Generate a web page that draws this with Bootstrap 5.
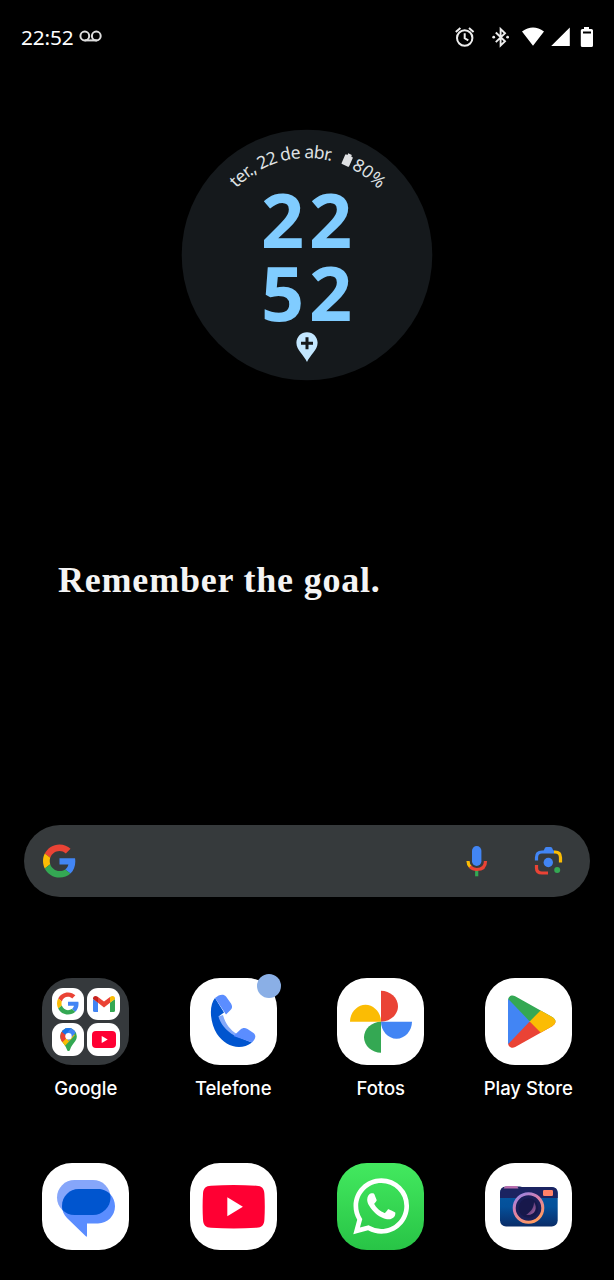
<!DOCTYPE html>
<html lang="pt-BR">
<head>
<meta charset="utf-8">
<meta name="viewport" content="width=device-width, initial-scale=1">
<title>Tela inicial</title>
<link href="https://cdn.jsdelivr.net/npm/bootstrap@5.3.0/dist/css/bootstrap.min.css" rel="stylesheet">
<style>
  body { background:#000; color:#fff; font-family:"Noto Sans","Open Sans",sans-serif; }
  svg { display:block; flex:none; overflow:visible; }
  .phone { width:614px; height:1280px; overflow:hidden; }
  .phone > * { flex-shrink:0; }
  .status { height:74px; padding:0 20px 0 21px; }
  .status-time { font-size:20.8px; line-height:1; letter-spacing:-.1px; }
  .clock-wrap { padding-top:56px; }
  .quote { font:bold 36px/1 "Liberation Serif",serif; letter-spacing:.8px; color:#f4f4f4; margin:182px 0 0 58px; height:263px; white-space:nowrap; }
  .searchbar { height:72px; margin:0 24px; border-radius:36px; background:#363a3c; padding:0 27px 0 19px; }
  .apps { margin:80.5px 12px 0; }
  .apps + .apps { margin-top:58px; }
  .app { width:147.5px; height:127px; }
  .tile { width:87px; height:87px; border-radius:30px; background:#fff; }
  .folder { background:#35393c; display:grid; grid-template-columns:32.5px 32.5px; gap:3px; padding:10px 9.5px; }
  .mini { border-radius:11px; background:#fff; display:grid; place-items:center; height:32.5px; }
  .app-name { font:500 18.5px/24px Inter,Lato,sans-serif; margin-top:11px; white-space:nowrap; }
  .wa { background:linear-gradient(#43e95f,#28c446); }
  .dot { width:24px; height:24px; right:-4px; top:-4px; background:#8aafe6; }
</style>
</head>
<body>
<svg width="0" height="0" class="position-absolute" aria-hidden="true">
  <symbol id="g-logo" viewBox="0 0 48 48">
    <path fill="#ea4335" d="M24 9.5c3.54 0 6.71 1.22 9.21 3.6l6.85-6.85C35.9 2.38 30.47 0 24 0 14.62 0 6.51 5.38 2.56 13.22l7.98 6.19C12.43 13.72 17.74 9.5 24 9.5z"/>
    <path fill="#4285f4" d="M46.98 24.55c0-1.57-.15-3.09-.38-4.55H24v9.02h12.94c-.58 2.96-2.26 5.48-4.78 7.18l7.73 6c4.51-4.18 7.09-10.36 7.09-17.65z"/>
    <path fill="#fbbc05" d="M10.53 28.59c-.48-1.45-.76-2.99-.76-4.59s.27-3.14.76-4.59l-7.98-6.19C.92 16.46 0 20.12 0 24c0 3.88.92 7.54 2.56 10.78l7.97-6.19z"/>
    <path fill="#34a853" d="M24 48c6.48 0 11.93-2.13 15.89-5.81l-7.73-6c-2.15 1.45-4.92 2.3-8.16 2.3-6.26 0-11.57-4.22-13.47-9.91l-7.98 6.19C6.51 42.62 14.62 48 24 48z"/>
  </symbol>
</svg>

<main class="phone d-flex flex-column">
  <header class="status d-flex align-items-center justify-content-between">
    <div class="d-flex align-items-center">
      <span class="status-time">22:52</span>
      <svg class="ms-1" width="24" height="13" viewBox="-.8 0 24 13" fill="none" stroke="#ddd" stroke-width="2"><circle cx="6" cy="6" r="4.4"/><circle cx="17.500" cy="6" r="4.4"/><path d="M6 10.4h12"/></svg>
    </div>
    <!-- alarm, bluetooth, wifi, signal, battery -->
    <svg width="140" height="24" viewBox="454 25 140 24">
      <g fill="none" stroke="#eee" stroke-width="2"><circle cx="464.7" cy="38" r="7.7"/><path d="M464.7 33.3v5l3.6 2.1M455.8 32l4.6-3.9M469 28.1l4.6 3.9"/></g>
      <path d="M495.8 32.5l9.2 8.8-4.4 4.3V29l4.4 4.2-9.2 8.9" fill="none" stroke="#eee" stroke-width="1.9"/>
      <circle cx="493.7" cy="37.2" r="1.4" fill="#eee"/><circle cx="507.6" cy="37.2" r="1.4" fill="#eee"/>
      <path fill="#fff" d="M522 31.6q11-8.4 22 0L533 45.7zM551.2 46h18.6V27.6z"/>
      <path fill="#fff" fill-rule="evenodd" d="M584 27h5v2h2.400q1.600 0 1.600 1.600V45.400q0 1.600-1.600 1.600h-9q-1.600 0-1.600-1.600V30.600q0-1.600 1.600-1.600h1.600zM583 31.500v2h8v-2z"/>
    </svg>
  </header>

  <section class="clock-wrap d-flex justify-content-center">
    <svg width="250" height="250" viewBox="182 130 250 250">
      <circle cx="307" cy="255" r="125.300" fill="#15191c"/>
      <path id="arcDate" d="M236.600 188.300A97 97 0 0 1 404 255" fill="none"/>
      <path id="arcPct" d="M351.300 168.700A97 97 0 0 1 404 255" fill="none"/>
      <g fill="#dfe1e3" font-size="17.500" font-family="'Noto Sans',sans-serif">
        <text><textPath href="#arcDate" textLength="103.500">ter., 22 de abr.</textPath></text>
        <text><textPath href="#arcPct" textLength="34.500">80%</textPath></text>
      </g>
      <path transform="translate(347.400 160) rotate(24)" fill="#dfe1e3" d="M-2-6.500h4v1.800h1.200q.9 0 .9.900V5q0 .9-.9.900h-6.400q-.9 0-.9-.9v-8.800q0-.9.900-.9H-2z"/>
      <g fill="#80ccff" font-family="'Noto Sans',sans-serif" font-weight="700" font-size="75.500" letter-spacing="4.700">
        <text x="261" y="247.500">22</text><text x="261" y="321">52</text>
      </g>
      <path fill="#c3e7ff" d="M307 332.300c-6 0-10.600 4.700-10.600 10.500 0 7.500 7.600 12.400 10.600 19.200 3-6.800 10.600-11.700 10.600-19.200 0-5.800-4.600-10.500-10.600-10.500z"/>
      <path stroke="#15191c" stroke-width="3" d="M301 343.200h12M307 337.200v12"/>
    </svg>
  </section>

  <div class="quote">Remember the goal.</div>

  <section class="searchbar d-flex align-items-center justify-content-between">
    <svg width="33" height="34"><use href="#g-logo"/></svg>
    <svg width="98" height="34" viewBox="465 844 98 34">
      <rect x="472" y="846" width="9.400" height="20" rx="4.700" fill="#4285f4"/>
      <g fill="none" stroke-width="3.200"><path d="M476.700 870v6.300" stroke="#34a853"/><path d="M468 861q0 3.500 2.500 6.200" stroke="#fbbc04"/><path d="M470 866.700q2.800 2.800 6.700 2.800 8.800 0 8.800-8.500" stroke="#ea4335"/></g>
      <g fill="none" stroke-width="3.200"><path d="M536.500 860.500v-3q0-5.500 5.500-5.500h12" stroke="#4285f4"/><path d="M554 852h1q5.500 0 5.500 5.500v5" stroke="#fbbc04"/><path d="M536.500 865v3q0 5 5.500 5h6" stroke="#ea4335"/></g>
      <path fill="#4285f4" d="M543.500 851l1.500-3.200q.5-.8 1.500-.8h4q1 0 1.500.8l1.500 3.200z"/><circle cx="548.300" cy="862.500" r="4.700" fill="#4285f4"/><circle cx="557.200" cy="870" r="3" fill="#34a853"/>
    </svg>
  </section>

  <section class="apps d-flex">
    <div class="app d-flex flex-column align-items-center">
      <div class="tile folder">
        <div class="mini"><svg width="22" height="23"><use href="#g-logo"/></svg></div>
        <div class="mini"><svg width="22" height="16" viewBox="0 0 22 16"><path fill="#4285f4" d="M0 3l5 3.500V16H1.500Q0 16 0 14.500z"/><path fill="#34a853" d="M22 3l-5 3.500V16h3.500q1.500 0 1.500-1.500z"/><path fill="#ea4335" d="M5 1l6 4.600L17 1v5.800l-6 4.700-6-4.700z"/><path fill="#c5221f" d="M0 2.500C0 0 2.600-.8 5 1v5.800L0 3z"/><path fill="#fbbc04" d="M22 2.500C22 0 19.400-.8 17 1v5.800L22 3z"/></svg></div>
        <div class="mini"><svg width="17" height="23" viewBox="0 0 17 23"><clipPath id="pin"><path d="M8.500 0A8.300 8.300 0 0 0 .2 8.300c0 5.600 4.700 7 6.600 12.900.4 1.300.9 1.800 1.700 1.800s1.300-.5 1.700-1.800c1.900-5.900 6.600-7.300 6.600-12.900A8.300 8.300 0 0 0 8.500 0z"/></clipPath><g clip-path="url(#pin)"><path fill="#34a853" d="M0 0h17v23H0z"/><path fill="#fbbc04" d="M-1 13L8.500 3 15 7 3 20z"/><path fill="#4285f4" d="M5-1h12v4L8.500 13 6 8z"/><path fill="#ea4335" d="M-1 2l4-1 5.500 7.300L1 15.500z"/><path fill="#1a73e8" d="M4-1h8L5.500 7 1.500 3.500z"/></g><circle cx="8.500" cy="8.300" r="3.200" fill="#fff"/></svg></div>
        <div class="mini"><svg width="24" height="17" viewBox="0 0 24 17"><rect width="24" height="17" rx="4" fill="#ff0033"/><path fill="#fff" d="M9.700 5l6 3.500-6 3.500z"/></svg></div>
      </div>
      <div class="app-name">Google</div>
    </div>
    <div class="app d-flex flex-column align-items-center">
      <div class="tile position-relative">
        <svg width="87" height="87" viewBox="0 0 87 87">
          <path fill="#83a9fb" d="M27 39l6-2c2 8 7 15 14 19l-3 8-14-9z"/>
          <path fill="#0055cf" d="M25 20c-6 7-5.500 24 2 36 8 12 23 17.500 35 8.500L44.500 57.500C36 53 30 45 28.500 38.500l5.500-4z"/>
          <path fill="#5b8dff" d="M25 20c4-3.500 8.500-4.500 11-1.500l5 7c1.500 2.500 1.500 4.500-.5 6.500L36 36.500zM43.500 58l7-6.500c2-1.800 4.500-2 7-.5l6 4c3.500 3 1.500 6.500-1.500 9.500z"/>
        </svg>
        <span class="dot rounded-circle position-absolute"></span>
      </div>
      <div class="app-name">Telefone</div>
    </div>
    <div class="app d-flex flex-column align-items-center">
      <div class="tile">
        <svg width="87" height="87" viewBox="0 0 87 87"><path fill="#ea4335" d="M44 12.700c9 0 17 7 17 15.500s-8 15.500-17 15.500z"/><path fill="#fbbc04" d="M13 43.700c0-9 7-17 15.500-17s15.500 8 15.500 17z"/><path fill="#4285f4" d="M44 43.700h31c0 9-7 17-15.500 17S44 52.700 44 43.700z"/><path fill="#34a853" d="M44 43.700v31c-9 0-17-7-17-15.500s8-15.500 17-15.500z"/></svg>
      </div>
      <div class="app-name">Fotos</div>
    </div>
    <div class="app d-flex flex-column align-items-center">
      <div class="tile">
        <svg width="87" height="87" viewBox="0 0 87 87"><clipPath id="tri"><path d="M23 22.500c0-4 3.600-6.300 7.200-4.200l37 20.700c4.400 2.500 4.400 6.700 0 9.200l-37 20.700c-3.600 2.100-7.200-.2-7.200-4.200z"/></clipPath><g clip-path="url(#tri)"><path fill="#34a853" d="M20 10h51v33.500H20z"/><path fill="#ea4335" d="M20 43.400h51V77H20z"/><path fill="#4285f4" d="M20 17.500l24.700 25.900L20 69.300z"/><path fill="#fbbc04" d="M44.700 43.400L60 28h16v31H60z"/></g></svg>
      </div>
      <div class="app-name">Play Store</div>
    </div>
  </section>

  <section class="apps d-flex">
    <div class="app d-flex flex-column align-items-center">
      <div class="tile">
        <svg width="87" height="87" viewBox="0 0 87 87">
          <clipPath id="bub"><rect x="15" y="17" width="53.500" height="35" rx="17.500"/></clipPath>
          <rect x="15" y="17" width="53.500" height="35" rx="17.500" fill="#86a6fa"/>
          <path fill="#5b8dff" d="M37 26h19c9.500 0 17 7.700 17 17.200s-7.500 17.200-17 17.200H45V73q0 1.300-1.200.3L25 55c-3-3-5-7-5-12 0-9.500 7.500-17 17-17z"/>
          <path fill="#0055cf" clip-path="url(#bub)" d="M37 26h19c9.500 0 17 7.700 17 17.200s-7.500 17.200-17 17.200H45L25 55c-3-3-5-7-5-12 0-9.500 7.500-17 17-17z"/>
        </svg>
      </div>
    </div>
    <div class="app d-flex flex-column align-items-center">
      <div class="tile">
        <svg width="87" height="87" viewBox="0 0 87 87"><path fill="#ff0033" d="M21 22.700q22.700-1.400 45.400 0c5.500.3 7.600 2.600 8 8q.8 13 0 26c-.4 5.400-2.500 7.700-8 8q-22.700 1.400-45.400 0c-5.500-.3-7.600-2.600-8-8q-.8-13 0-26c.4-5.400 2.500-7.700 8-8z"/><path fill="#fff" d="M37.300 34.300l15.600 9.400-15.600 9.600z"/></svg>
      </div>
    </div>
    <div class="app d-flex flex-column align-items-center">
      <div class="tile wa">
        <svg width="87" height="87" viewBox="0 0 87 87"><path fill="#fff" transform="translate(16.300 15.200) scale(3.500)" d="M13.601 2.326A7.850 7.850 0 0 0 7.994 0C3.627 0 .068 3.558.064 7.926c0 1.399.366 2.760 1.057 3.965L0 16l4.204-1.102a7.900 7.900 0 0 0 3.790.965h.004c4.368 0 7.926-3.558 7.930-7.930A7.900 7.900 0 0 0 13.600 2.326zM7.994 14.521a6.600 6.600 0 0 1-3.356-.920l-.240-.144-2.494.654.666-2.433-.156-.251a6.560 6.560 0 0 1-1.007-3.505c0-3.626 2.957-6.584 6.591-6.584a6.560 6.560 0 0 1 4.660 1.931 6.560 6.560 0 0 1 1.928 4.660c-.004 3.639-2.961 6.592-6.592 6.592m3.615-4.934c-.197-.099-1.170-.578-1.353-.646-.182-.065-.315-.099-.445.099-.133.197-.513.646-.627.775-.114.133-.232.148-.430.050-.197-.100-.836-.308-1.592-.985-.590-.525-.985-1.175-1.103-1.372-.114-.198-.011-.304.088-.403.087-.088.197-.232.296-.346.100-.114.133-.198.198-.330.065-.134.034-.248-.015-.347-.050-.099-.445-1.076-.612-1.470-.160-.389-.323-.335-.445-.340-.114-.007-.247-.007-.380-.007a.730.730 0 0 0-.529.247c-.182.198-.691.677-.691 1.654s.710 1.916.810 2.049c.098.133 1.394 2.132 3.383 2.992.470.205.840.326 1.129.418.475.152.904.129 1.246.080.380-.058 1.171-.480 1.338-.943.164-.464.164-.858.114-.943-.049-.084-.182-.133-.380-.232"/></svg>
      </div>
    </div>
    <div class="app d-flex flex-column align-items-center">
      <div class="tile">
        <svg width="87" height="87" viewBox="0 0 87 87">
          <defs><linearGradient id="camBody" x2="0" y2="1"><stop offset="0" stop-color="#0458a2"/><stop offset=".5" stop-color="#04509a"/><stop offset="1" stop-color="#0a2c68"/></linearGradient><linearGradient id="ring" x2=".6" y2="1"><stop offset="0" stop-color="#8c86ec"/><stop offset=".45" stop-color="#d87fae"/><stop offset="1" stop-color="#ff9a62"/></linearGradient><linearGradient id="glass" x2="1" y2="1"><stop offset=".2" stop-color="#3b2a68"/><stop offset="1" stop-color="#b06aa8"/></linearGradient></defs>
          <rect x="15" y="24" width="57.700" height="39.500" rx="6" fill="url(#camBody)"/>
          <path fill="#1b2361" d="M15 35v-5q0-6.500 6-6.500h14l2 .5h29.500q6.200 0 6.200 6V35z"/>
          <path fill="#b86fae" d="M18.500 25.500q1-2.500 3-2.500H32l1.500 2.500z"/>
          <rect x="58" y="27" width="10" height="6" rx="1.200" fill="#ff8268"/>
          <circle cx="43.500" cy="45" r="14.300" fill="#1a1e58" stroke="url(#ring)" stroke-width="3"/>
          <circle cx="43.500" cy="45" r="9.800" fill="#17184b"/>
          <path d="M49 39c4 6 1 14-8 13 3-2 8-6 8-13z" fill="url(#glass)"/>
        </svg>
      </div>
    </div>
  </section>
</main>
<script src="https://cdn.jsdelivr.net/npm/bootstrap@5.3.0/dist/js/bootstrap.bundle.min.js"></script>
</body>
</html>
